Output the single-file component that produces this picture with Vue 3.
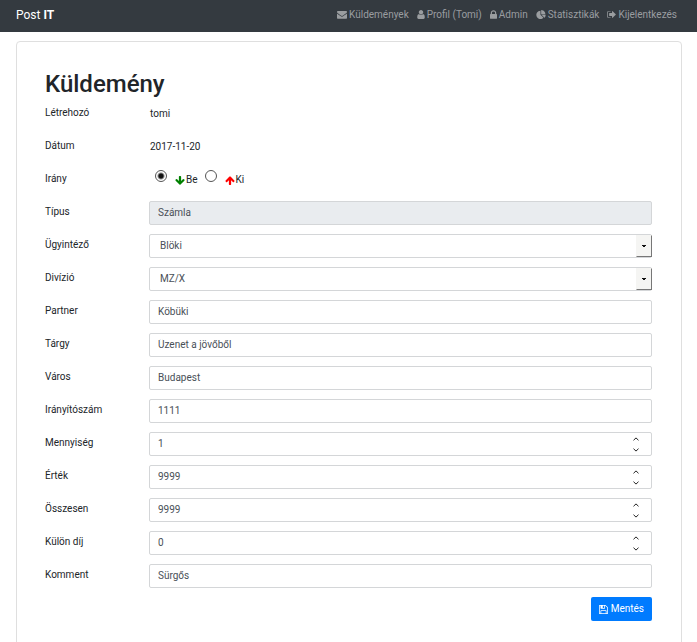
<script setup>
import { reactive } from 'vue'

const icons = {
  envelope: {
    box: '0 128 1792 1536', w: 10,
    d: 'M1792 710v794q0 66-47 113t-113 47h-1472q-66 0-113-47t-47-113v-794q44 49 101 87 362 246 497 345 57 42 92.5 65.5t94.5 48 110 24.5h2q51 0 110-24.5t94.5-48 92.5-65.5q170-123 498-345 57-39 100-87zm0-294q0 79-49 151t-122 123q-376 261-468 325-10 7-42.5 31t-54 38.5-52 32.5-57.5 27-50 9h-2q-23 0-50-9t-57.5-27-52-32.5-54-38.5-42.5-31q-91-64-262-182.5t-205-142.5q-62-42-117-115.5t-55-136.5q0-78 41.5-130t118.5-52h1472q65 0 112.5 47t47.5 113z'
  },
  user: {
    box: '256 128 1280 1536', w: 8,
    d: 'M1536 1399q0 109-62.5 187t-150.5 78h-854q-88 0-150.5-78t-62.5-187q0-85 8.5-160.5t31.5-152 58.5-131 94-89 134.5-34.5q131 128 313 128t313-128q76 0 134.5 34.5t94 89 58.5 131 31.5 152 8.5 160.5zm-256-887q0 159-112.5 271.5t-271.5 112.5-271.5-112.5-112.5-271.5 112.5-271.5 271.5-112.5 271.5 112.5 112.5 271.5z'
  },
  lock: {
    box: '320 128 1152 1408', w: 7,
    d: 'M640 768h512v-192q0-106-75-181t-181-75-181 75-75 181v192zm832 96v576q0 40-28 68t-68 28h-960q-40 0-68-28t-28-68v-576q0-40 28-68t68-28h32v-192q0-184 132-316t316-132 316 132 132 316v192h32q40 0 68 28t28 68z'
  },
  pie: {
    box: '0 0 1728 1664', w: 10,
    d: 'M768 890l546 546q-106 108-247.5 168t-298.5 60q-209 0-385.5-103t-279.5-279.5-103-385.5 103-385.5 279.5-279.5 385.5-103v762zm187 6h773q0 157-60 298.5t-168 247.5zm709-128h-768v-768q209 0 385.5 103t279.5 279.5 103 385.5z'
  },
  signout: {
    box: '64 192 1600 1408', w: 9,
    d: 'M704 1440q0 4 1 20t.5 26.5-3 23.5-10 19.5-20.5 6.5h-320q-119 0-203.5-84.5t-84.5-203.5v-704q0-119 84.5-203.5t203.5-84.5h320q13 0 22.5 9.5t9.5 22.5q0 4 1 20t.5 26.5-3 23.5-10 19.5-20.5 6.5h-320q-66 0-113 47t-47 113v704q0 66 47 113t113 47h312l11.5 1 11.5 3 8 5.5 7 9 2 13.5zm928-544q0 26-19 45l-544 544q-19 19-45 19t-45-19-19-45v-288h-448q-26 0-45-19t-19-45v-384q0-26 19-45t45-19h448v-288q0-26 19-45t45-19 45 19l544 544q19 19 19 45z'
  }
}

const nav = [
  { icon: icons.envelope, text: 'Küldemények' },
  { icon: icons.user, text: 'Profil (Tomi)' },
  { icon: icons.lock, text: 'Admin' },
  { icon: icons.pie, text: 'Statisztikák' },
  { icon: icons.signout, text: 'Kijelentkezés' }
]

const directions = [
  {
    value: 'in', text: 'Be',
    d: 'M1675 832q0 53-37 90l-651 652q-39 37-91 37-53 0-90-37l-651-652q-38-36-38-90 0-53 38-91l74-75q39-37 91-37 53 0 90 37l294 294v-704q0-52 38-90t90-38h128q52 0 90 38t38 90v704l294-294q37-37 90-37 52 0 91 37l75 75q37 39 37 91z'
  },
  {
    value: 'out', text: 'Ki',
    d: 'M1675 971q0 51-37 90l-75 75q-38 38-91 38-54 0-90-38l-294-293v704q0 52-37.5 84.5t-90.5 32.5h-128q-53 0-90.5-32.5t-37.5-84.5v-704l-294 293q-36 38-90 38t-90-38l-75-75q-38-38-38-90 0-53 38-91l651-651q35-37 90-37 54 0 91 37l651 651q37 39 37 91z'
  }
]

const form = reactive({
  direction: 'in', type: 'Számla', agent: 'Blöki', division: 'MZ/X',
  partner: 'Köbüki', subject: 'Üzenet a jövőből', city: 'Budapest', zip: '1111',
  quantity: 1, value: 9999, total: 9999, fee: 0, comment: 'Sürgős'
})

const fields = [
  { key: 'type', label: 'Típus', kind: 'text', disabled: true },
  { key: 'agent', label: 'Ügyintéző', kind: 'select' },
  { key: 'division', label: 'Divízió', kind: 'select' },
  { key: 'partner', label: 'Partner', kind: 'text' },
  { key: 'subject', label: 'Tárgy', kind: 'text' },
  { key: 'city', label: 'Város', kind: 'text' },
  { key: 'zip', label: 'Irányítószám', kind: 'text' },
  { key: 'quantity', label: 'Mennyiség', kind: 'number' },
  { key: 'value', label: 'Érték', kind: 'number' },
  { key: 'total', label: 'Összesen', kind: 'number' },
  { key: 'fee', label: 'Külön díj', kind: 'number' },
  { key: 'comment', label: 'Komment', kind: 'text' }
]
</script>

<template>
  <header class="navbar">
    <a class="brand" href="#">Post <b>IT</b></a>
    <nav class="links">
      <a v-for="n in nav" :key="n.text" href="#">
        <svg :viewBox="n.icon.box" :width="n.icon.w" height="9" aria-hidden="true"><path :d="n.icon.d" /></svg>
        <span>{{ n.text }}</span>
      </a>
    </nav>
  </header>

  <main class="card">
    <h1>Küldemény</h1>
    <form class="form" @submit.prevent>
      <div class="row">
        <span class="label">Létrehozó</span>
        <span class="static">tomi</span>
      </div>
      <div class="row">
        <span class="label">Dátum</span>
        <span class="static">2017-11-20</span>
      </div>
      <div class="row">
        <span class="label">Irány</span>
        <div class="radios" role="radiogroup" aria-label="Irány">
          <label v-for="o in directions" :key="o.value" class="option" :class="o.value">
            <input v-model="form.direction" type="radio" name="direction" :value="o.value" />
            <span class="caption">
              <svg viewBox="64 128 1664 1536" width="10" height="9" aria-hidden="true"><path :d="o.d" /></svg>
              <span>{{ o.text }}</span>
            </span>
          </label>
        </div>
      </div>

      <div v-for="f in fields" :key="f.key" class="row">
        <label class="label" :for="f.key">{{ f.label }}</label>
        <div v-if="f.kind === 'select'" class="control">
          <select :id="f.key" v-model="form[f.key]">
            <option>{{ form[f.key] }}</option>
          </select>
          <span class="drop"><svg viewBox="0 0 4 2" width="4" height="2" aria-hidden="true"><path d="M0 0h4v1H3v1H1V1H0z" /></svg></span>
        </div>
        <div v-else-if="f.kind === 'number'" class="control">
          <input :id="f.key" v-model.number="form[f.key]" type="number" />
          <span class="spin">
            <button type="button" :aria-label="f.label + ' +'" @click="form[f.key]++">
              <svg viewBox="0 0 6 4" width="6" height="4" aria-hidden="true"><path d="M.5 3.3 3 .9l2.5 2.4" /></svg>
            </button>
            <button type="button" :aria-label="f.label + ' -'" @click="form[f.key]--">
              <svg viewBox="0 0 6 4" width="6" height="4" aria-hidden="true"><path d="M.5.7 3 3.1 5.5.7" /></svg>
            </button>
          </span>
        </div>
        <div v-else class="control">
          <input :id="f.key" v-model="form[f.key]" type="text" :disabled="f.disabled" />
        </div>
      </div>

      <button class="save" type="submit">
        <svg viewBox="128 128 1536 1536" width="9" height="9" aria-hidden="true"><path d="M512 1536h768v-384h-768v384zm896 0h128v-896q0-14-10-38.5t-20-34.5l-281-281q-10-10-34-20t-39-10v416q0 40-28 68t-68 28h-576q-40 0-68-28t-28-68v-416h-128v1280h128v-416q0-40 28-68t68-28h832q40 0 68 28t28 68v416zm-384-928v-320q0-13-9.5-22.5t-22.5-9.5h-192q-13 0-22.5 9.5t-9.5 22.5v320q0 13 9.5 22.5t22.5 9.5h192q13 0 22.5-9.5t9.5-22.5zm640 32v928q0 40-28 68t-68 28h-1344q-40 0-68-28t-28-68v-1344q0-40 28-68t68-28h928q40 0 88 20t76 48l280 280q28 28 48 76t20 88z" /></svg>
        <span>Mentés</span>
      </button>
    </form>
  </main>
</template>

<style>
body {
  margin: 0;
  background: #fff;
  color: #212529;
  font-family: Roboto, "Liberation Sans", sans-serif;
  font-size: 10px;
  line-height: 16px;
}
</style>

<style scoped>
* { box-sizing: border-box; }
svg { flex: none; fill: currentColor; }
.navbar {
  display: flex;
  align-items: center;
  justify-content: space-between;
  height: 32px;
  padding: 0 20px 3px 16px;
  background: #343a40;
}
.navbar a { color: #9a9da0; text-decoration: none; }
.navbar .brand { color: #fff; font-size: 12px; }
.links { display: flex; gap: 8px; }
.links a { display: flex; align-items: center; gap: 2px; }
.card {
  margin: 9px 15px 0 16px;
  padding: 28px 29px 28px 28px;
  border: 1px solid #dfdfdf;
  border-radius: 4px;
}
h1 {
  margin: 0 0 4px;
  font-size: 24px;
  line-height: 28px;
  font-weight: 500;
}
.form { display: flex; flex-direction: column; gap: 9px; }
.row {
  display: grid;
  grid-template-columns: 104px 1fr;
  height: 24px;
}
.label { padding-top: 3px; }
.static { padding: 4px 0 0 1px; }
.control { position: relative; }
.control input, .control select {
  display: block;
  width: 100%;
  height: 24px;
  margin: 0;
  padding: 0 8px;
  border: 1px solid #d4d6d8;
  border-radius: 2px;
  background: #fff;
  color: #495057;
  font: inherit;
  appearance: none;
  outline: none;
}
.control input { padding-bottom: 2px; line-height: 20px; }
.control input:disabled { background: #e9ecef; }
.control select { padding-left: 10px; }
input[type="number"] { appearance: textfield; }
input[type="number"]::-webkit-inner-spin-button { appearance: none; margin: 0; }
.drop {
  position: absolute;
  top: 1px;
  right: 0;
  bottom: 1px;
  width: 16px;
  display: flex;
  align-items: center;
  justify-content: center;
  border: 1px solid #f5f5f3;
  border-right-color: #777;
  border-bottom-color: #777;
  background: #f5f5f3;
  color: #111;
  pointer-events: none;
}
.spin {
  position: absolute;
  top: 1px;
  right: 10px;
  bottom: 1px;
  width: 12px;
  display: flex;
  flex-direction: column;
}
.spin button {
  flex: 1;
  display: flex;
  align-items: center;
  justify-content: center;
  padding: 0;
  border: 0;
  background: none;
  color: #222;
}
.spin svg { fill: none; stroke: currentColor; }
.radios { display: flex; gap: 7px; padding-left: 6px; }
.option { display: flex; gap: 8px; }
.option input {
  width: 12px;
  height: 12px;
  margin: 2px 0 0;
  border: 1px solid #555;
  border-radius: 50%;
  background: #fff;
  appearance: none;
}
.option input:checked { background: radial-gradient(circle, #111 0 2px, #fff 4px); }
.caption { display: flex; align-items: center; gap: 1px; height: 16px; margin-top: 4px; }
.in svg { fill: #008000; }
.out svg { fill: #f00; }
.save {
  align-self: flex-end;
  display: flex;
  align-items: center;
  gap: 3px;
  height: 24px;
  padding: 0 8px;
  border: 0;
  border-radius: 2px;
  background: #007bff;
  color: #fff;
  font: inherit;
}
</style>
